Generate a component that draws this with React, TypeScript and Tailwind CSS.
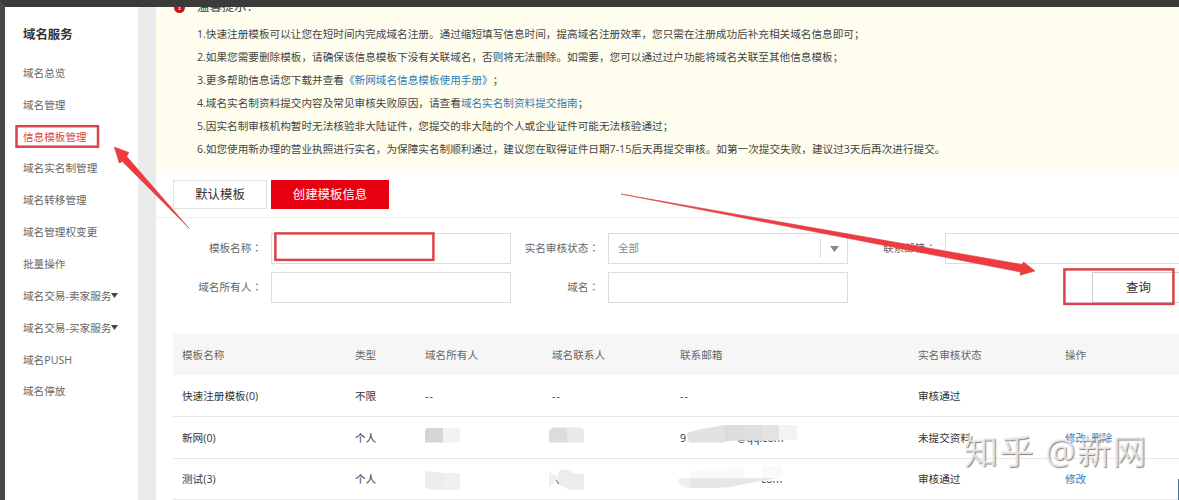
import React from "react";

const menu = [
  { label: "域名总览" },
  { label: "域名管理" },
  { label: "信息模板管理", active: true },
  { label: "域名实名制管理" },
  { label: "域名转移管理" },
  { label: "域名管理权变更" },
  { label: "批量操作" },
  { label: "域名交易-卖家服务", more: true },
  { label: "域名交易-买家服务", more: true },
  { label: "域名PUSH" },
  { label: "域名停放" },
];

const rows = [
  { name: "快速注册模板(0)", type: "不限", owner: "--", contact: "--", mail: "--", status: "审核通过", actions: [] },
  { name: "新网(0)", type: "个人", owner: "", contact: "", mail: "9", tail: "@qq.com", status: "未提交资料", actions: ["修改", "删除"] },
  { name: "测试(3)", type: "个人", owner: "", contact: "", mail: "", tail: "com", status: "审核通过", actions: ["修改"] },
];

const Caret = ({ className }: { className: string }) => (
  <svg viewBox="0 0 10 6" className={className} fill="currentColor" preserveAspectRatio="none">
    <path d="M0 0h10L5 6z" />
  </svg>
);

const Label = ({ children, className }: { children: React.ReactNode; className: string }) => (
  <label className={`shrink-0 pr-[9px] text-right text-[#666] ${className}`}>
    {children}
    <span className="font-['Noto_Sans_CJK_TC',sans-serif]">：</span>
  </label>
);

const Sidebar = () => (
  <aside className="w-[133px] shrink-0 bg-white pl-[18px]">
    <h2 className="mt-[18px] h-[20px] text-[12.4px] leading-[20px] font-bold text-[#333]">域名服务</h2>
    <ul className="mt-[13px] text-[#666]">
      {menu.map((item) => (
        <li key={item.label} className="flex h-[31.85px] items-center whitespace-nowrap">
          <span className={item.active ? "text-[#d9444c]" : ""}>{item.label}</span>
          {item.more && <Caret className="mb-[3px] h-[5px] w-[7px] text-[#444]" />}
        </li>
      ))}
    </ul>
  </aside>
);

const Notice = () => (
  <section className="h-[162px] overflow-hidden bg-[#fffeee] text-[#444]">
    <div className="-mt-[10px] flex h-[20px] items-center pl-[18px]">
      <span className="flex h-[11px] w-[11px] items-center justify-center rounded-full bg-[#c8141e] text-[9px] font-bold text-white">
        !
      </span>
      <span className="ml-[12px] text-[12.4px]">温馨提示：</span>
    </div>
    <div className="mt-[6px] pl-[41px] leading-[23px] whitespace-nowrap">
      <p>1.快速注册模板可以让您在短时间内完成域名注册。通过缩短填写信息时间，提高域名注册效率，您只需在注册成功后补充相关域名信息即可；</p>
      <p>2.如果您需要删除模板，请确保该信息模板下没有关联域名，否则将无法删除。如需要，您可以通过过户功能将域名关联至其他信息模板；</p>
      <p>
        3.更多帮助信息请您下载并查看<a className="text-[#337ab7]">《新网域名信息模板使用手册》</a>；
      </p>
      <p>
        4.域名实名制资料提交内容及常见审核失败原因，请查看<a className="text-[#337ab7]">域名实名制资料提交指南</a>；
      </p>
      <p>5.因实名制审核机构暂时无法核验非大陆证件，您提交的非大陆的个人或企业证件可能无法核验通过；</p>
      <p>6.如您使用新办理的营业执照进行实名，为保障实名制顺利通过，建议您在取得证件日期7-15后天再提交审核。如第一次提交失败，建议过3天后再次进行提交。</p>
    </div>
  </section>
);

const SearchForm = () => (
  <form className="pt-[15px]">
    <div className="flex h-[31px] items-center">
      <Label className="w-[115px]">模板名称</Label>
      <div className="h-[31px] w-[240px] shrink-0 border border-[#ddd]" />
      <Label className="w-[97px]">实名审核状态</Label>
      <div className="flex h-[31px] w-[240px] shrink-0 items-center border border-[#ddd] pl-[9px] text-[#888]">
        <span className="flex-1 pt-px">全部</span>
        <span className="flex h-[19px] w-[27px] items-center justify-center border-l border-[#ddd]">
          <Caret className="h-[6px] w-[9px] text-[#888]" />
        </span>
      </div>
      <Label className="w-[97px]">联系邮箱</Label>
      <div className="h-[31px] w-[240px] shrink-0 border border-[#ddd]" />
    </div>
    <div className="mt-[8px] flex h-[31px] items-center">
      <Label className="w-[115px]">域名所有人</Label>
      <div className="h-[31px] w-[240px] shrink-0 border border-[#ddd]" />
      <Label className="w-[97px]">域名</Label>
      <div className="h-[31px] w-[240px] shrink-0 border border-[#ddd]" />
      <button
        type="button"
        className="ml-[244px] h-[31px] w-[93px] shrink-0 border border-[#ccc] pt-[2px] text-[12.4px] text-[#333]">
        查询
      </button>
    </div>
  </form>
);

const TemplateTable = () => (
  <table className="mt-[31px] ml-[17px] w-[1006px] table-fixed border-collapse">
    <colgroup>
      <col className="w-[173px]" />
      <col className="w-[70px]" />
      <col className="w-[127px]" />
      <col className="w-[128px]" />
      <col className="w-[238px]" />
      <col className="w-[147px]" />
      <col />
    </colgroup>
    <thead className="bg-[#f6f6f6] text-left text-[#666]">
      <tr className="h-[41px]">
        {["模板名称", "类型", "域名所有人", "域名联系人", "联系邮箱", "实名审核状态", "操作"].map((title) => (
          <th key={title} className="pt-[3px] pl-[9px] font-normal">
            {title}
          </th>
        ))}
      </tr>
    </thead>
    <tbody className="text-[#333]">
      {rows.map((row) => (
        <tr key={row.name} className="h-[41.5px] border-b border-[#e8e8e8] *:pt-[3px] *:pl-[9px]">
          <td>{row.name}</td>
          <td>{row.type}</td>
          <td className="tracking-[1.2px]">{row.owner}</td>
          <td className="tracking-[1.2px]">{row.contact}</td>
          <td>
            <span className={row.tail ? "inline-block w-[57px]" : "tracking-[1.2px]"}>{row.mail}</span>
            {row.tail === "com" ? <span className="ml-[24px]">{row.tail}</span> : row.tail}
          </td>
          <td>{row.status}</td>
          <td className="text-[#337ab7]">
            <span className="flex gap-[5px]">
              {row.actions.map((action) => (
                <a key={action}>{action}</a>
              ))}
            </span>
          </td>
        </tr>
      ))}
    </tbody>
  </table>
);

// blurred-out personal data in the owner, contact and mail columns
const Redactions = () => (
  <g>
    <path d="M427 428h16v14.500h-18v-12.500z" fill="#d5d5d5" />
    <path d="M443 428h17v14.500h-17z" fill="#f2f2f2" />
    <path d="M549 431q2-3.500 6-3.500h12v15h-18z" fill="#dcdcdc" />
    <path d="M567 427.500h13q4 1 4 4v11h-17z" fill="#e9e9e9" />
    <path d="M425 471l18 2v17h-10l-8-2z" fill="#ececec" />
    <path d="M443 473h17v17h-17z" fill="#f0f0f0" />
    <path d="M549 472l9 5-9 11z" fill="#f0f0f0" />
    <path d="M559 471q8-4 14 2l11 1v16h-14l-14-7z" fill="#ececec" />
    <path d="M556 480l3 4" stroke="#666" strokeWidth="1" />
    <path d="M690 425h107v15H738v3h-48z" fill="#fff" />
    <path d="M687 433q15-5 38-8v17.500h-36q-2-5-2-9.500z" fill="#e2e2e2" />
    <path d="M725 425h19v15l-19 1.500z" fill="#dcdcdc" />
    <path d="M744 425h18v15.500h-18z" fill="#dfdfdf" />
    <path d="M762 425h17v15.500h-17z" fill="#e3e3e3" />
    <path d="M779 425h18v15h-18z" fill="#f3f3f3" />
    <path d="M756 465h30v16h-30z" fill="#fff" />
    <path d="M690 471l54-4v11h-54zM762 466h20v12h-20z" fill="#fafafa" />
    <path d="M690 478h-11q-2 6 5 9l6 1z" fill="#f0f0f0" />
    <path d="M690 478h89l-19 3-30 6-13 1h-27z" fill="#e7e7e7" />
  </g>
);

const Annotations = () => (
  <svg className="pointer-events-none absolute inset-0" width="1179" height="500" viewBox="0 0 1179 500">
    <Redactions />
    <g fill="none" stroke="#d9444a" strokeWidth="2.500">
      <rect x="16.500" y="126.200" width="81.500" height="20.500" />
      <rect x="275.400" y="233.400" width="158" height="26.500" />
      <rect x="1064.400" y="269.400" width="109" height="34.500" />
    </g>
    <g fill="#ee3b3f" stroke="#d9444a" strokeWidth="0.600">
      <path d="M114.300 147l14.500 5.500-2 4 62.500 72-67-67-3 1.500z" />
      <path d="M621 194l401 70.500 1.500-2.500 11.500 9-15 4.200.5-3.200z" />
    </g>
  </svg>
);

const App = () => {
  return (
    <div className="relative flex h-[500px] w-[1179px] overflow-hidden border-t-[7px] border-l-[5px] border-t-[#3b3b3b] border-l-[#484848] bg-[#ebebeb] font-['Open_Sans','Noto_Sans_CJK_SC',sans-serif] text-[10.63px] [text-spacing-trim:space-all]">
      <Sidebar />
      <main className="ml-[18px] w-[1023px] shrink-0 overflow-hidden bg-white">
        <Notice />
        <div className="flex h-[49px] gap-[4px] border-b border-[#eee] pt-[11px] pl-[17px] text-[12.4px]">
          <button type="button" className="h-[29px] w-[94px] border border-[#e2e2e2] pt-[2px] text-[#333]">
            默认模板
          </button>
          <button type="button" className="h-[29px] w-[118px] bg-[#e60012] pt-[2px] text-white">
            创建模板信息
          </button>
        </div>
        <SearchForm />
        <TemplateTable />
      </main>
      <div className="absolute -top-[7px] -left-[5px]">
        <Annotations />
      </div>
      <div className="absolute top-[420px] left-[959px] text-[34px] leading-[48px] tracking-[1.4px] whitespace-nowrap text-[#f4f4f4]/80 [text-shadow:1px_1px_1px_#888]">
        知乎 @新网
      </div>
      <div className="absolute top-[472px] right-0 h-[21px] w-px bg-[#4a6f96]" />
    </div>
  );
};

export default App;
